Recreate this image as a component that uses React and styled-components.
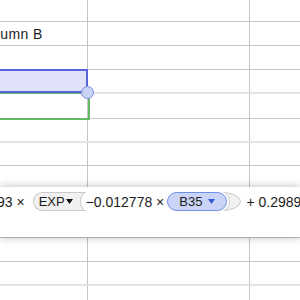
import React from "react";
import styled, { createGlobalStyle } from "styled-components";

const Global = createGlobalStyle`
  html, body { margin: 0; padding: 0; background: #fff; }
  body { width: 300px; height: 300px; overflow: hidden; }
`;

const Sheet = styled.div`
  position: relative;
  width: 300px;
  height: 300px;
  overflow: hidden;
  background: #fff;
  font-family: "Liberation Sans", Arial, sans-serif;
  color: #1c1c1c;
`;

const Row = styled.div`
  display: grid;
  grid-template-columns: 88px 162px 1fr;
  box-sizing: border-box;
  height: ${(p) => p.$h}px;
  border-bottom: ${(p) => (p.$soft ? "2px solid #e3e3e3" : "1px solid #c6c6c6")};
`;

const Cell = styled.div`
  display: flex;
  align-items: center;
  white-space: nowrap;
  font-size: 14px;
  letter-spacing: 0.4px;
  border-right: ${(p) => (p.$last ? "none" : "1px solid #c4c4c4")};
`;

const CellText = styled.span`
  margin-left: -22px;
`;

const Selection = styled.div`
  position: absolute;
  left: -2px;
  top: 69px;
  width: 90px;
  height: 24px;
  box-sizing: border-box;
  border: 2px solid #5666da;
  background: #dfe2f8;
  z-index: 2;
`;

const Target = styled.div`
  position: absolute;
  left: -2px;
  top: 92px;
  width: 92px;
  height: 28px;
  box-sizing: border-box;
  border: 2px solid #66b866;
  z-index: 1;
`;

const Handle = styled.div`
  position: absolute;
  left: 81px;
  top: 86px;
  width: 13px;
  height: 13px;
  box-sizing: border-box;
  border-radius: 50%;
  background: #c9d3f6;
  border: 1px solid #7a8be6;
  z-index: 3;
`;

const Panel = styled.div`
  position: absolute;
  left: 0;
  right: 0;
  top: 187px;
  height: 50px;
  box-sizing: border-box;
  padding-top: 5px;
  background: #fff;
  box-shadow: 0 0 9px rgba(0, 0, 0, 0.28);
  z-index: 4;
  overflow: hidden;
`;

const FormulaRow = styled.div`
  display: flex;
  align-items: center;
  height: 19px;
  white-space: nowrap;
  font-size: 14px;
  color: #1c1c1c;
  & > * {
    flex: none;
  }
`;

const Term = styled.span`
  margin-left: ${(p) => p.$ml || 0}px;
`;

const FuncPill = styled.span`
  position: relative;
  display: inline-flex;
  align-items: center;
  gap: 1px;
  height: 19px;
  width: 53px;
  box-sizing: border-box;
  margin-left: 8px;
  padding-left: 5px;
  background: #f1f1f1;
  border: 1px solid #cacaca;
  border-right: none;
  border-radius: 10px 0 0 10px;
  overflow: hidden;
  font-size: 13px;
  &::after {
    content: "";
    position: absolute;
    left: 46px;
    top: -4px;
    width: 22px;
    height: 25px;
    box-sizing: border-box;
    border-radius: 50%;
    background: #fff;
    border: 1px solid #cacaca;
  }
`;

const RefPill = styled.span`
  position: relative;
  z-index: 1;
  display: inline-flex;
  align-items: center;
  gap: 6px;
  height: 19px;
  box-sizing: border-box;
  margin-left: 3px;
  padding: 0 11px;
  background: #c9d4f6;
  border: 1px solid #7090e6;
  border-radius: 10px;
  font-size: 13px;
  box-shadow: 1px 0 0 1px #fff;
`;

const Paren = styled.svg`
  display: block;
  margin-left: -6px;
`;

const CaretSvg = styled.svg`
  display: block;
  flex: none;
`;

const Caret = ({ color }) => (
  <CaretSvg width="7" height="5" viewBox="0 0 7 5">
    <path d="M0 0 H7 L3.5 5 Z" fill={color} />
  </CaretSvg>
);

const rows = [
  { h: 22 },
  { h: 24, text: "Column B" },
  { h: 24 },
  { h: 24, soft: true },
  { h: 25 },
  { h: 24, soft: true },
  { h: 23 },
  { h: 24 },
  { h: 24 },
  { h: 24 },
  { h: 24 },
  { h: 24, soft: true },
  { h: 20 },
];

export default function App() {
  return (
    <>
      <Global />
      <Sheet>
        {rows.map((r, i) => (
          <Row key={i} $h={r.h} $soft={r.soft}>
            <Cell>{r.text && <CellText>{r.text}</CellText>}</Cell>
            <Cell />
            <Cell $last />
          </Row>
        ))}
        <Target />
        <Selection />
        <Handle />
        <Panel>
          <FormulaRow>
            <Term $ml={-3}>93 ×</Term>
            <FuncPill>
              EXP
              <Caret color="#111" />
            </FuncPill>
            <Term>−0.012778 ×</Term>
            <RefPill>
              B35
              <Caret color="#3557d6" />
            </RefPill>
            <Paren width="20" height="19" viewBox="0 0 20 19">
              <path
                d="M1 0.5 A18.5 9 0 0 1 1 18.5 A7.5 9 0 0 0 1 0.5 Z"
                fill="#f2f2f2"
                stroke="#c8c8c8"
                strokeWidth="1"
              />
            </Paren>
            <Term $ml={5}>+ 0.298934</Term>
          </FormulaRow>
        </Panel>
      </Sheet>
    </>
  );
}
